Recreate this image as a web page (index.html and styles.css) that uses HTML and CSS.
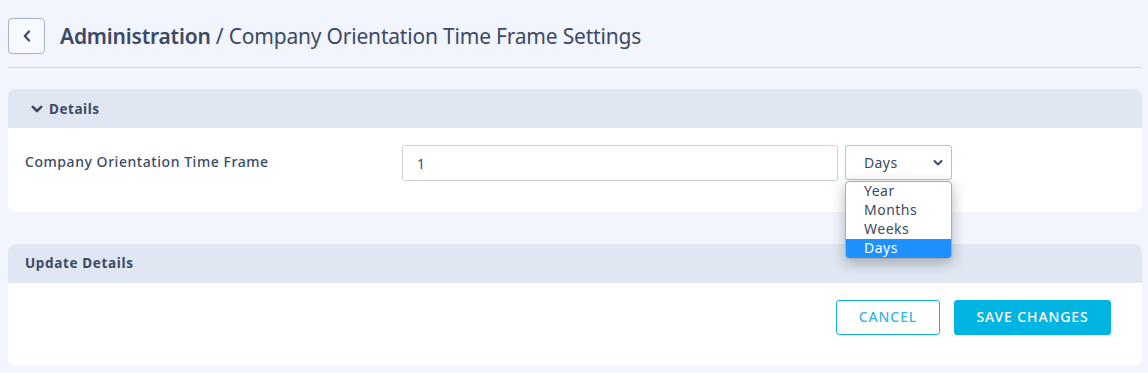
FILE: index.html
```html
<!DOCTYPE html>
<html lang="en">
<head>
  <meta charset="UTF-8">
  <title>Company Orientation Time Frame Settings</title>
  <link rel="stylesheet" href="styles.css">
</head>
<body>
  <div class="page">
    <div class="page-header">
      <button class="back-btn" type="button">
        <svg width="10" height="12" viewBox="0 0 10 12"><path d="M7 1.5 L2.8 6 L7 10.5" fill="none" stroke="#3b4a64" stroke-width="2.2" stroke-linecap="round" stroke-linejoin="round"/></svg>
      </button>
      <h1 class="title"><span class="title-main">Administration</span> / Company Orientation Time Frame Settings</h1>
    </div>

    <div class="card">
      <div class="card-header">
        <svg class="chevron" width="12" height="10" viewBox="0 0 12 10"><path d="M1.8 2.8 L6 7 L10.2 2.8" fill="none" stroke="#3b4a64" stroke-width="2.6" stroke-linecap="round" stroke-linejoin="round"/></svg>
        Details
      </div>
      <div class="card-body form-row">
        <label class="field-label">Company Orientation Time Frame</label>
        <div class="field-controls">
          <input class="text-input" type="text" value="1">
          <div class="select-wrap">
            <div class="select-box">
              <span>Days</span>
              <svg width="10" height="8" viewBox="0 0 10 8"><path d="M1.5 2 L5 5.5 L8.5 2" fill="none" stroke="#3b4a64" stroke-width="2" stroke-linecap="round" stroke-linejoin="round"/></svg>
            </div>
            <ul class="select-menu">
              <li>Year</li>
              <li>Months</li>
              <li>Weeks</li>
              <li class="selected">Days</li>
            </ul>
          </div>
        </div>
      </div>
    </div>

    <div class="card">
      <div class="card-header plain">Update Details</div>
      <div class="card-body actions">
        <button class="btn btn-outline" type="button">CANCEL</button>
        <button class="btn btn-primary" type="button">SAVE CHANGES</button>
      </div>
    </div>
  </div>
</body>
</html>
```

FILE: styles.css
```css
body {
  margin: 0;
  background-color: #f2f5fd;
  font-family: 'Noto Sans', 'Open Sans', sans-serif;
  color: #3b4a64;
}

.page {
  padding: 18px 6px 0 8px;
}

.page-header {
  display: flex;
  align-items: center;
  gap: 15px;
  padding-bottom: 13px;
  border-bottom: 1px solid #d8dce3;
}

.back-btn {
  width: 37px;
  height: 36px;
  display: flex;
  align-items: center;
  justify-content: center;
  background: #f7f9fd;
  border: 1px solid #a9b3c2;
  border-radius: 4px;
  padding: 0;
}

.title {
  margin: 0;
  font-size: 21px;
  font-weight: 400;
  letter-spacing: -0.2px;
  color: #3b4a64;
}

.title-main {
  font-weight: 600;
}

.card {
  margin-top: 21px;
  background: #fff;
  border-radius: 8px;
}

.card + .card {
  margin-top: 32px;
}

.card-header {
  height: 39px;
  display: flex;
  align-items: center;
  gap: 6px;
  padding-left: 23px;
  background: #e0e7f2;
  border-radius: 8px 8px 0 0;
  font-size: 13.5px;
  font-weight: 700;
  letter-spacing: 0.55px;
}

.card-header.plain {
  padding-left: 17px;
  padding-bottom: 1px;
  height: 38px;
  letter-spacing: 0.65px;
}

.card-body {
  background: #fff;
  border-radius: 0 0 8px 8px;
}

.form-row {
  display: flex;
  padding: 17px 0 31px 17px;
}

.field-label {
  width: 377px;
  padding-top: 7px;
  font-size: 14px;
  font-weight: 500;
  letter-spacing: 0.55px;
}

.field-controls {
  display: flex;
  gap: 7px;
}

.text-input {
  box-sizing: border-box;
  width: 436px;
  height: 36px;
  padding: 0 14px;
  border: 1px solid #cdd2d9;
  border-radius: 3px;
  font-family: inherit;
  font-size: 14px;
  color: #3b4a64;
}

.select-wrap {
  position: relative;
}

.select-box {
  box-sizing: border-box;
  width: 107px;
  height: 35px;
  display: flex;
  align-items: center;
  justify-content: space-between;
  padding: 0 8px 0 18px;
  border: 1px solid #7fd6ee;
  border-radius: 3px;
  font-size: 14px;
  letter-spacing: 0.4px;
}

.select-menu {
  position: absolute;
  top: 36px;
  left: 0;
  box-sizing: border-box;
  width: 107px;
  margin: 0;
  padding: 0;
  list-style: none;
  background: #fff;
  border: 1px solid #a8adb5;
  border-radius: 4px;
  box-shadow: 0 4px 14px rgba(0, 0, 0, 0.28);
  overflow: hidden;
  font-size: 14px;
  letter-spacing: 0.5px;
  z-index: 5;
}

.select-menu li {
  height: 19px;
  line-height: 17px;
  padding-left: 18px;
}

.select-menu li.selected {
  background: #1e90ff;
  color: #fff;
}

.actions {
  display: flex;
  justify-content: flex-end;
  gap: 14px;
  padding: 17px 31px 31px 0;
}

.btn {
  height: 35px;
  border-radius: 3px;
  font-family: inherit;
  font-size: 14px;
  font-weight: 500;
  letter-spacing: 0.9px;
  padding: 0 0 2px;
}

.btn-outline {
  width: 104px;
  background: #fff;
  border: 1px solid #14b4de;
  color: #33b7df;
}

.btn-primary {
  width: 157px;
  background: #00b5e2;
  border: 1px solid #00b5e2;
  color: #fff;
}
```
